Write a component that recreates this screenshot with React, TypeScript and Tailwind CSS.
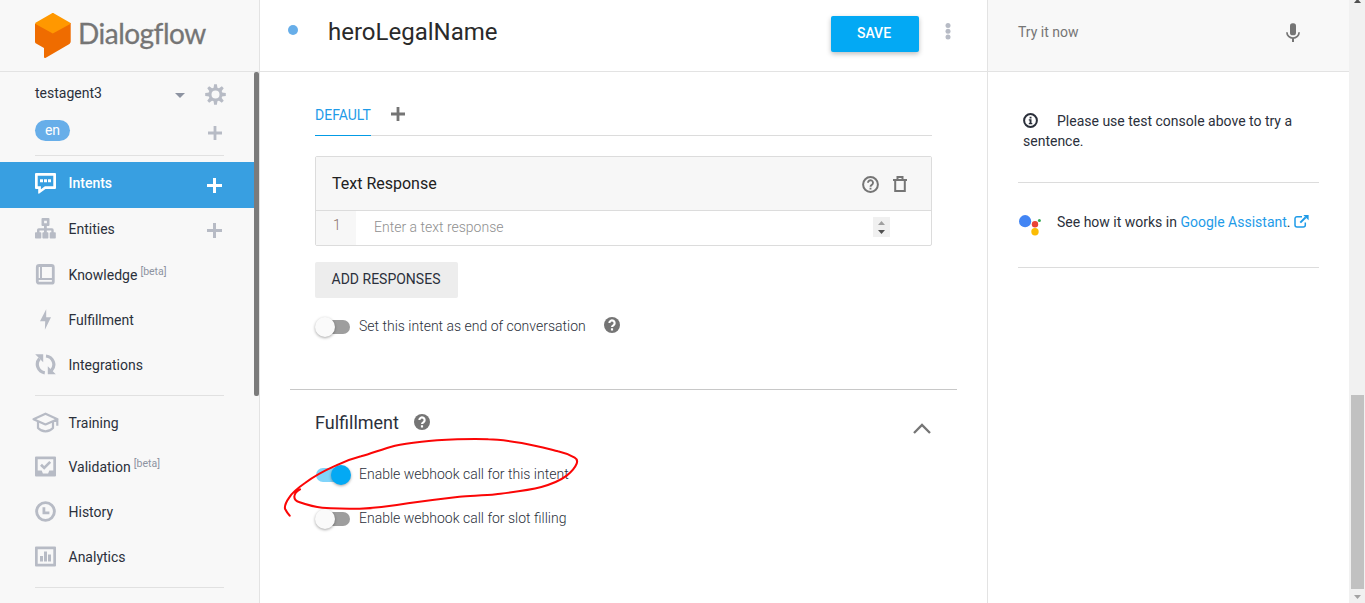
import React from 'react';

type IconProps = { className?: string };

const Plus = ({ className = '' }: IconProps) => (
  <svg viewBox="0 0 14 14" className={className} fill="currentColor">
    <path d="M5.600 0h2.800v5.600H14v2.800H8.400V14H5.600V8.400H0V5.600h5.600z" />
  </svg>
);

const Logo = () => (
  <svg width="36" height="46" viewBox="0 0 36 46">
    <path d="M0 11v17.500c0 1 .4 1.600 1.100 2L9 35v9c0 .9.700 1.300 1.400.9L34 31.200c1-.6 1.700-1.500 1.700-2.700V10z" fill="#ef6c00" />
    <path d="M16.600.4.500 9.700c-.5.300-.5.900 0 1.200l17.300 9.600 17.400-9.600c.5-.3.500-.9 0-1.200L19.100.4c-.8-.5-1.700-.5-2.500 0z" fill="#ff9800" />
  </svg>
);

const Gear = () => (
  <svg width="21" height="21" viewBox="-10.5 -10.5 21 21" fill="#b7bbc5">
    {[0, 45, 90, 135, 180, 225, 270, 315].map((angle) => (
      <path key={angle} d="M-2-6 L-1.400-10.300 H1.400 L2-6z" transform={`rotate(${angle})`} />
    ))}
    <circle r="5.500" fill="none" stroke="#b7bbc5" strokeWidth="3" />
  </svg>
);

const IntentsIcon = () => (
  <svg width="21" height="21" viewBox="0 0 21 21" fill="currentColor">
    <path d="M1 0h19a1 1 0 0 1 1 1v14a1 1 0 0 1-1 1h-9.500L4.300 20.600c-.7.400-1.100.2-1.100-.5V16H1a1 1 0 0 1-1-1V1a1 1 0 0 1 1-1zm1.700 2.700v10.600h3.200v3l4-3h8.400V2.700z" fillRule="evenodd" />
    <path d="M5 6.300h3v2.900H5zM9 6.300h3v2.900H9zM13 6.300h3v2.900h-3z" />
  </svg>
);

const EntitiesIcon = () => (
  <svg width="21" height="21" viewBox="0 0 21 21" fill="currentColor">
    <path d="M7.500 0h6a1 1 0 0 1 1 1v6a1 1 0 0 1-1 1h-1.700v2.300H17a1.700 1.700 0 0 1 1.700 1.700v2.300h1.300a.8.800 0 0 1 .8.800v4.600a.8.800 0 0 1-.8.800h-4.500a.8.800 0 0 1-.8-.8v-4.600a.8.800 0 0 1 .8-.8h.8v-1.800h-4.500v1.800h.8a.8.800 0 0 1 .8.800v4.600a.8.800 0 0 1-.8.800H8.200a.8.800 0 0 1-.8-.8v-4.600a.8.800 0 0 1 .8-.8H9v-1.800H4.500v1.800h1a.8.800 0 0 1 .8.800v4.600a.8.800 0 0 1-.8.800H.8a.8.800 0 0 1-.8-.8v-4.600a.8.800 0 0 1 .8-.8H2V12a1.700 1.700 0 0 1 1.700-1.700H9V8H7.500a1 1 0 0 1-1-1V1a1 1 0 0 1 1-1zm1.600 2.700v2.600h2.800V2.700z" fillRule="evenodd" />
  </svg>
);

const KnowledgeIcon = () => (
  <svg width="21" height="21" viewBox="0 0 21 21" fill="none" stroke="currentColor">
    <rect x="2.300" y="1.500" width="16" height="17.700" rx="1.800" strokeWidth="2.800" />
    <path d="M2.500 15h16M6 2v13" strokeWidth="2" />
  </svg>
);

const FulfillmentIcon = () => (
  <svg width="21" height="21" viewBox="0 0 21 21" fill="currentColor">
    <path d="M11.200.3 5 12.300h5.200L9.900 20.700 16 8.200h-4.800z" />
  </svg>
);

const IntegrationsIcon = () => (
  <svg width="21" height="21" viewBox="0 0 21 21">
    <path d="M4.500 4.600A8.600 8.600 0 0 0 9.800 18.800M11 2A8.600 8.600 0 0 1 16.500 16.400" fill="none" stroke="currentColor" strokeWidth="3.200" />
    <path d="M.2.300h8v8zM20.800 20.300h-8v-8z" fill="currentColor" />
  </svg>
);

const TrainingIcon = () => (
  <svg width="27" height="21" viewBox="0 0 27 21" fill="none" stroke="currentColor" strokeWidth="2.200" strokeLinejoin="round">
    <path d="M1.500 7.200 13.500 1.700l12 5.500-12 5.200zM25.300 7v6.800M6 10v6c2 2.200 4.600 3.300 7.500 3.300S19 18.200 21 16v-6" />
  </svg>
);

const ValidationIcon = () => (
  <svg width="21" height="21" viewBox="0 0 21 21" fill="currentColor">
    <path d="M1 .5h19a1 1 0 0 1 1 1v18a1 1 0 0 1-1 1H1a1 1 0 0 1-1-1v-18a1 1 0 0 1 1-1zM2.700 3.200v11.300h4l1.200 2.900h5.200l1.200-2.900h4V3.200z" fillRule="evenodd" />
    <path d="m6 8.700 3.200 3.200 6-6" fill="none" stroke="currentColor" strokeWidth="2.700" />
  </svg>
);

const HistoryIcon = () => (
  <svg width="21" height="21" viewBox="0 0 21 21" fill="none" stroke="currentColor">
    <circle cx="10.500" cy="10.500" r="8.900" strokeWidth="2.900" />
    <path d="M8.900 6.200v5.700h5.500" strokeWidth="2.800" />
  </svg>
);

const AnalyticsIcon = () => (
  <svg width="21" height="21" viewBox="0 0 21 21" fill="currentColor">
    <path d="M1 .5h19a1 1 0 0 1 1 1v18a1 1 0 0 1-1 1H1a1 1 0 0 1-1-1v-18a1 1 0 0 1 1-1zM2.700 3.200v14.600h15.600V3.200z" fillRule="evenodd" />
    <path d="M5 10h3v5.500H5zM9 5.500h3v10H9zM13 8.500h3v7h-3z" />
  </svg>
);

const HelpSolid = () => (
  <svg width="16" height="16" viewBox="2 2 20 20" fill="#757575">
    <circle cx="12" cy="12" r="10" />
    <path d="M8.700 9.600a3.300 3.300 0 1 1 5.100 2.800c-1.100.7-1.800 1.100-1.800 2.200M12 16.200v2.600" fill="none" stroke="#fff" strokeWidth="2.700" />
  </svg>
);

const HelpOutline = () => (
  <svg width="17" height="17" viewBox="0 0 17 17" fill="none" stroke="#757575">
    <circle cx="8.500" cy="8.500" r="7.400" strokeWidth="2" />
    <path d="M6 6.700a2.500 2.500 0 1 1 3.900 2.100c-.9.600-1.400.9-1.400 1.900M8.500 11.700v1.800" strokeWidth="1.900" />
  </svg>
);

const Trash = () => (
  <svg width="14" height="16" viewBox="0 0 14 16" fill="none" stroke="#757575" strokeWidth="2">
    <path d="M0 4h14M4.500 3.500V1h5v2.500M2.200 4v11h9.600V4" />
  </svg>
);

const Mic = () => (
  <svg width="14" height="20" viewBox="0 0 14 20">
    <rect x="4" y="0.300" width="6" height="12" rx="2.600" fill="#757575" />
    <path d="M.9 9.300A6.100 5.800 0 0 0 13.100 9.300" fill="none" stroke="#757575" strokeWidth="1.700" />
    <path d="M7 15v4" stroke="#757575" strokeWidth="2" />
  </svg>
);

const Info = () => (
  <svg width="15" height="15" viewBox="0 0 15 15" className="mr-[19px] inline-block align-[-2px]">
    <circle cx="7.500" cy="7.500" r="6.400" fill="none" stroke="#2b303b" strokeWidth="2" />
    <path d="M6.600 3.700h1.900v1.700H6.600zM5.800 6.300h2.700V10h.8v1.300H5.800V10h.8V7.500h-.8z" fill="#2b303b" />
  </svg>
);

const AssistantLogo = () => (
  <svg width="23" height="21" viewBox="0 0 23 21">
    <circle cx="6.100" cy="6.200" r="6.100" fill="#4285f4" />
    <circle cx="16" cy="9.200" r="3.200" fill="#ea4335" />
    <circle cx="20.400" cy="5.500" r="1.500" fill="#34a853" />
    <circle cx="16" cy="16.800" r="3.700" fill="#fbbc05" />
  </svg>
);

const ExternalLink = () => (
  <svg width="15" height="13" viewBox="0 0 15 13" fill="none" stroke="#1e9be8" strokeWidth="1.500">
    <path d="M8 1.700H3A2 2 0 0 0 1 3.700V10a2 2 0 0 0 2 2h6.300a2 2 0 0 0 2-2V7.600" />
    <path d="m6.300 7.600 5.400-5.300" strokeWidth="2" />
    <path d="M9.300 0h5.300v5.300z" fill="#1e9be8" stroke="none" />
  </svg>
);

type NavItemProps = {
  icon: React.ReactNode;
  label: string;
  beta?: boolean;
  className: string;
};

const NavItem = ({ icon, label, beta, className }: NavItemProps) => (
  <div className={`flex items-center pl-[35px] text-[#b7bbc5] ${className}`}>
    <div className="mb-px flex w-[33.500px] flex-none items-center">{icon}</div>
    <span className="text-[#2b303b]">{label}</span>
    {beta && <span className="mb-[7px] ml-[3px] text-[10.500px] text-[#8d93a1]">[beta]</span>}
  </div>
);

const Toggle = ({ on }: { on?: boolean }) => (
  <div className={`flex h-5 w-9 flex-none items-center ${on ? 'justify-end' : ''}`}>
    <div className={`flex h-[14px] w-[34px] items-center rounded-full ${on ? 'mr-px justify-end bg-[#81d4fa]' : 'ml-px bg-[#9e9e9e]'}`}>
      <div className={`size-5 flex-none rounded-full shadow-[0_1px_3px_rgba(0,0,0,0.35)] ${on ? '-mr-px bg-[#03a9f4]' : '-ml-px bg-[#fafafa]'}`} />
    </div>
  </div>
);

const Sidebar = () => (
  <aside className="flex w-[260px] flex-none flex-col border-r border-[#e3e3e3] bg-[#f8f8f8]">
    <div className="flex h-[72px] flex-none border-b border-[#e3e3e3] pl-[35px] pt-[13px]">
      <Logo />
      <span className="ml-[7px] font-[Lato] text-[28px] leading-[40px] tracking-[-0.500px] text-[#757575] [-webkit-text-stroke:0.3px_#757575]">Dialogflow</span>
    </div>
    <div className="flex min-h-0 flex-1">
      <nav className="w-[254px] flex-none">
        <div className="flex h-[42px] items-center pl-[35px]">
          <span className="w-[140px]">testagent3</span>
          <svg width="10" height="5" viewBox="0 0 10 5" className="mt-[5px]"><path d="M0 0h10L5 5z" fill="#8d93a1" /></svg>
          <div className="ml-5 mt-[3px]"><Gear /></div>
        </div>
        <div className="flex h-[41px] items-start pl-[35px] pt-[6px]">
          <span className="h-[21px] w-[35px] rounded-full bg-[#67aee9] text-center leading-[20px] text-white">en</span>
          <Plus className="ml-[138px] mt-[6px] size-[14px] text-[#b7bbc5]" />
        </div>
        <div className="ml-[35px] h-px w-[189px] bg-[#e1e1e1]" />
        <div className="mt-[6px] flex h-[46px] items-center bg-[#389fe1] pl-[35px] text-white">
          <div className="mb-[3px] w-[33.500px]"><IntentsIcon /></div>
          <span className="mb-1 w-[138.500px] font-medium">Intents</span>
          <Plus className="mt-px size-[15px]" />
        </div>
        <div className="flex h-[44px] items-center pl-[35px] text-[#b7bbc5]">
          <div className="mb-[3px] w-[33.500px]"><EntitiesIcon /></div>
          <span className="mb-0.5 w-[138.500px] text-[#2b303b]">Entities</span>
          <Plus className="mt-px size-[15px]" />
        </div>
        <NavItem icon={<KnowledgeIcon />} label="Knowledge" beta className="h-[46px]" />
        <NavItem icon={<FulfillmentIcon />} label="Fulfillment" className="h-[44px]" />
        <NavItem icon={<IntegrationsIcon />} label="Integrations" className="h-[46px]" />
        <div className="mb-[5px] ml-[35px] mt-[7px] h-px w-[189px] bg-[#e1e1e1]" />
        <NavItem icon={<div className="-ml-[3px]"><TrainingIcon /></div>} label="Training" className="h-[44px]" />
        <NavItem icon={<ValidationIcon />} label="Validation" beta className="h-[44px]" />
        <NavItem icon={<HistoryIcon />} label="History" className="h-[46px]" />
        <NavItem icon={<AnalyticsIcon />} label="Analytics" className="h-[44px]" />
        <div className="ml-[35px] mt-[8px] h-px w-[189px] bg-[#e1e1e1]" />
      </nav>
      <div className="h-[324px] w-[5px] rounded-[2px] bg-[#7b7b7b]" />
    </div>
  </aside>
);

const Circled = () => (
  <svg
    className="pointer-events-none absolute left-[15px] top-[380px]"
    width="330"
    height="160"
    viewBox="0 0 990 480"
    fill="none"
    stroke="#fb0606"
    strokeWidth="6.200"
    strokeLinecap="round"
    strokeLinejoin="round"
  >
    <path d="M75 328C64 334 58 342 58 350C58 361 64 364 74 367C94 374 117 381 142 383C175 385 212 386 254 386C303 385 352 378 399 370C446 363 500 356 553 350C592 347 628 347 663 343C711 337 756 332 799 321C835 311 858 300 875 287C890 275 900 264 905 251C908 243 906 237 899 233C885 225 867 218 849 214C813 205 780 196 740 189C703 183 670 178 640 178C610 176 575 177 547 178C503 180 470 182 440 185C410 188 384 191 360 197C325 206 293 219 258 229C226 237 204 246 182 257C148 272 117 289 90 309C67 325 52 338 43 352C33 366 28 374 30 386C34 394 39 401 44 407" />
  </svg>
);

const Main = () => (
  <main className="relative w-[728px] flex-none border-r border-[#e3e3e3] bg-white font-light">
    <header className="flex h-[72px] border-b border-[#e3e3e3] pl-[28px]">
      <div className="mt-[25px] size-[10px] rounded-full bg-[#67aee9]" />
      <h1 className="ml-[30px] mt-[16px] w-[503px] text-[24px] font-normal leading-8 text-[#2a2a2a]">heroLegalName</h1>
      <button className="mt-4 h-9 w-[88px] rounded-[2px] bg-[#03a9f4] pb-0.5 pr-0.5 text-[14px] font-medium leading-[34px] text-white shadow-[0_2px_5px_rgba(0,0,0,0.26)]">SAVE</button>
      <svg width="6" height="18" viewBox="0 0 6 18" className="ml-[26px] mt-[22px]" fill="#b7bbc5">
        <circle cx="3" cy="3.500" r="2.500" /><circle cx="3" cy="9.200" r="2.500" /><circle cx="3" cy="15" r="2.500" />
      </svg>
    </header>
    <div className="ml-[55px] flex h-[64px] w-[617px] border-b border-[#dcdcdc]">
      <div className="-mb-px h-[64px] w-[56px] border-b border-[#039be5] pt-[33px] leading-5 font-normal text-[#1e9be8]">DEFAULT</div>
      <Plus className="ml-[20px] mt-[35px] size-[14px] text-[#757575]" />
    </div>
    <section className="ml-[55px] mt-[20px] w-[617px] rounded-[2px] border border-[#dcdcdc]">
      <div className="flex h-[54px] items-center border-b border-[#dcdcdc] bg-[#f7f7f7] pl-4">
        <h2 className="w-[530px] text-[16px] font-normal text-[#212121]">Text Response</h2>
        <div className="mt-px"><HelpOutline /></div>
        <div className="ml-[14px]"><Trash /></div>
      </div>
      <div className="flex h-[34px]">
        <div className="w-[40px] bg-[#f7f7f7] pl-[17px] pt-[4px] leading-5 text-[#8a6f63]">1</div>
        <div className="w-[517px] pl-[18px] pt-[6px] leading-5 text-[#8f8f8f]">Enter a text response</div>
        <div className="mt-[6px] flex h-[20px] w-[17px] flex-col items-center gap-[5px] bg-[#f0f0f0] pt-[4px]">
          <svg width="7" height="4" viewBox="0 0 7 4"><path d="M3.500 0 7 4H0z" fill="#a0a0a0" /></svg>
          <svg width="7" height="4" viewBox="0 0 7 4"><path d="M0 0h7L3.500 4z" fill="#505050" /></svg>
        </div>
      </div>
    </section>
    <button className="ml-[55px] mt-4 block h-9 w-[143px] rounded-[2px] bg-[#ededed] pb-0.5 pr-px text-[14px] font-normal leading-[34px] text-[#2b303b]">ADD RESPONSES</button>
    <div className="ml-[55px] mt-[19px] flex h-5 items-center">
      <Toggle />
      <span className="mb-0.5 ml-2 w-[244.500px] text-[#2b303b]">Set this intent as end of conversation</span>
      <div className="mb-1"><HelpSolid /></div>
    </div>
    <div className="ml-[30px] mt-[52px] h-px w-[667px] bg-[#c8c8c8]" />
    <div className="ml-[55px] mt-[20px] flex h-6 w-[617px] items-center">
      <h2 className="w-[99px] text-[18px] font-normal text-[#2b303b]">Fulfillment</h2>
      <HelpSolid />
      <svg width="18" height="11" viewBox="0 0 18 11" className="ml-auto mr-px mt-[12px]">
        <path d="m1 10 8-8 8 8" fill="none" stroke="#757575" strokeWidth="2.300" />
      </svg>
    </div>
    <div className="ml-[55px] mt-[31px] flex h-5 items-center">
      <Toggle on />
      <span className="mb-0.5 ml-2 text-[#2b303b]">Enable webhook call for this intent</span>
    </div>
    <div className="ml-[55px] mt-6 flex h-5 items-center">
      <Toggle />
      <span className="mb-0.5 ml-2 text-[#2b303b]">Enable webhook call for slot filling</span>
    </div>
    <Circled />
  </main>
);

const Console = () => (
  <aside className="min-w-0 flex-1 bg-white">
    <header className="flex h-[72px] border-b border-[#e3e3e3] bg-[#f8f8f8] pl-[30px]">
      <span className="mt-[22px] w-[268px] leading-5 text-[#757575]">Try it now</span>
      <div className="mt-[23px]"><Mic /></div>
    </header>
    <div className="ml-[30px] w-[301px]">
      <p className="h-[111px] border-b border-[#dcdcdc] pl-[5px] pt-[39px] leading-5 text-[#2b303b]">
        <Info />Please use test console above to try a<br />sentence.
      </p>
      <div className="flex h-[85px] items-center border-b border-[#dcdcdc] pb-[5px]">
        <div className="mt-[5px] w-[39px] pl-px"><AssistantLogo /></div>
        <span className="text-[#2b303b]">See how it works in <span className="text-[#1e9be8]">Google Assistant</span>.</span>
        <div className="mb-[2px] ml-[3px]"><ExternalLink /></div>
      </div>
    </div>
  </aside>
);

const Scrollbar = () => (
  <div className="flex w-4 flex-none flex-col items-center bg-[#f1f1f1]">
    <svg width="7" height="3" viewBox="0 0 7 3"><path d="M2.500 0h2L7 3H0z" fill="#505050" /></svg>
    <div className="ml-px mt-[392px] h-[194px] w-[13px] bg-[#c1c1c1]" />
    <svg width="7" height="4" viewBox="0 0 7 4" className="mt-[6px]"><path d="M0 0h7L3.500 4z" fill="#a3a3a3" /></svg>
  </div>
);

export default function App() {
  return (
    <div className="flex h-[603px] w-[1365px] overflow-hidden bg-white font-[Roboto,sans-serif] text-[14px] text-[#2b303b] [&_svg]:block [&_p_svg]:inline-block">
      <Sidebar />
      <Main />
      <Console />
      <Scrollbar />
    </div>
  );
}
